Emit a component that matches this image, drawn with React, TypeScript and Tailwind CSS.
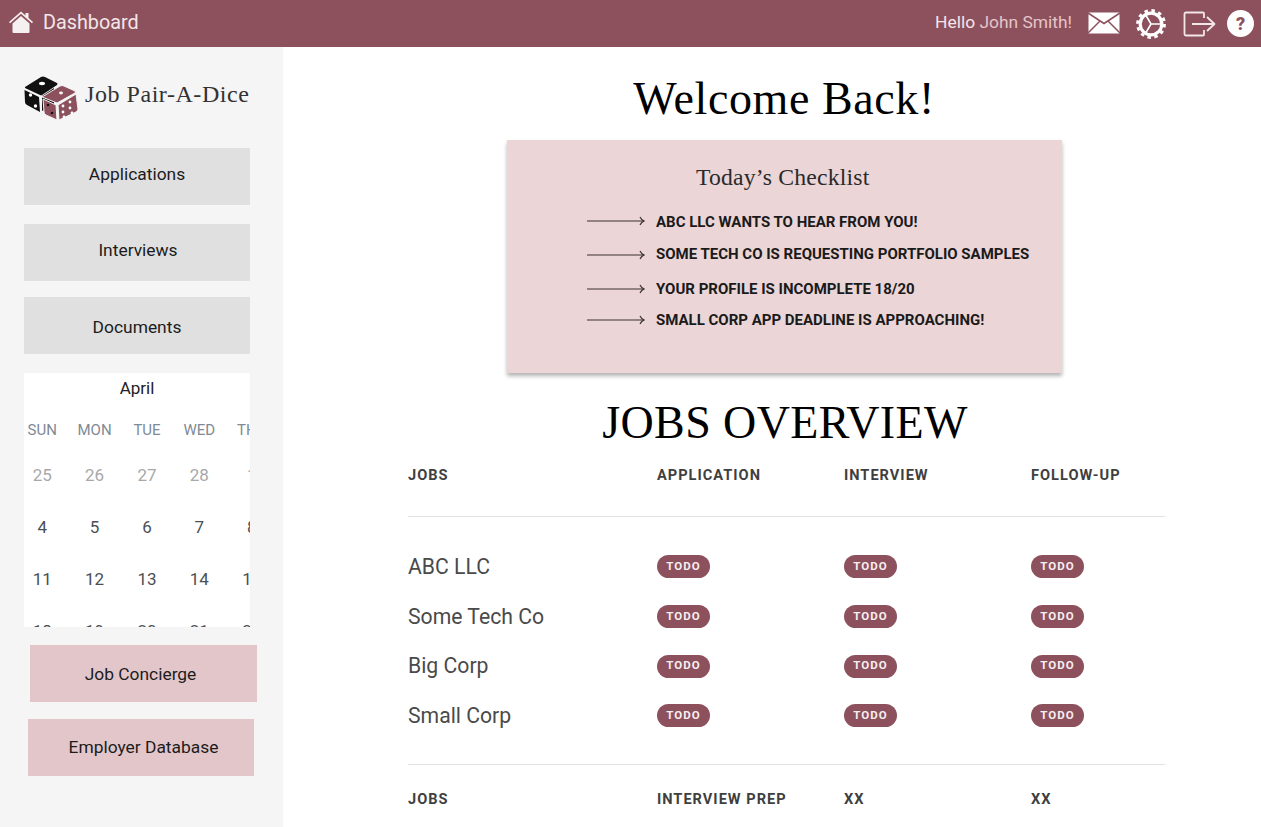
import React from "react";

const roboto = "font-['Roboto',sans-serif]";
const Arrow = ({ className }: { className: string }) => (
  <svg width="58" height="12" viewBox="0 0 58 12" className={`shrink-0 ${className}`} fill="none" stroke="#3a3030" strokeWidth="1.2">
    <path d="M0 6 H57" />
    <path d="M53 2 Q54.500 5 57 6 Q54.500 7 53 10" />
  </svg>
);

const Dice = () => (
  <svg width="56" height="46" viewBox="0 0 56 46">
    <path d="M1 12 L17 2 Q19 1 21 2 L33 8 Q34 9 33 10 L18 20 Q17 20.500 16 20 L1 13 Z" fill="#111" />
    <path d="M0.500 15 L15 22 L16 37 L3 30 Q1 29 1 27 Z" fill="#111" />
    <path d="M18 21 L30 13 L30 30 L18 36 Z" fill="#111" />
    <ellipse cx="18" cy="8.500" rx="3" ry="1.700" fill="#fff" />
    <circle cx="6.500" cy="20" r="1.700" fill="#fff" />
    <circle cx="11.500" cy="31" r="1.700" fill="#fff" />
    <path d="M18 22 L36 11 Q38 10 40 11 L51 16 Q52 17 51 18 L33 28 Z" fill="#8c515d" stroke="#f5f5f5" strokeWidth="1" />
    <path d="M19 24 L32 30 L33 45 L22 40 Q20 39 20 37 Z" fill="#8c515d" stroke="#f5f5f5" strokeWidth="1" />
    <path d="M34 30 L52 19 L54 34 Q54 36 52 37 L35 45 Z" fill="#8c515d" stroke="#f5f5f5" strokeWidth="1" />
    <ellipse cx="37" cy="18" rx="2" ry="1.400" fill="#f5f5f5" />
    <circle cx="24" cy="30" r="1.300" fill="#111" />
    <circle cx="28" cy="38" r="1.300" fill="#111" />
    <circle cx="39" cy="31" r="1.400" fill="#fff" />
    <circle cx="46" cy="27" r="1.400" fill="#fff" />
    <circle cx="39" cy="37" r="1.400" fill="#fff" />
    <circle cx="46" cy="33" r="1.400" fill="#fff" />
    <circle cx="40" cy="42" r="1.400" fill="#fff" />
    <circle cx="48" cy="38" r="1.400" fill="#fff" />
  </svg>
);

const Home = () => (
  <svg width="26" height="24" viewBox="0 0 26 24" fill="#f7f0f0">
    <path d="M1 12 L13 1.500 L17.500 5.400 V3 H20.500 V8 L25 12 L24 13.200 L13 3.800 L2 13.200 Z" />
    <path d="M4.500 13.500 L13 6 L21.500 13.500 V22 Q21.500 23 20.500 23 H5.500 Q4.500 23 4.500 22 Z" />
  </svg>
);

const Mail = () => (
  <svg width="32" height="22" viewBox="0 0 32 22">
    <rect x="0.500" y="0.500" width="31" height="21" fill="#fff" />
    <path d="M0 1 L16 11.500 L32 1 M0 21 L12 9 M32 21 L20 9" stroke="#8c515d" strokeWidth="1.500" fill="none" />
  </svg>
);

const Gear = () => (
  <svg width="32" height="32" viewBox="0 0 32 32" fill="none" stroke="#fff">
    <circle cx="16" cy="16" r="10.800" strokeWidth="3.200" />
    <circle cx="16" cy="16" r="13.500" strokeWidth="2.800" strokeDasharray="3.500 3.570" />
    <path d="M16 16 H26 M16 16 L11 7.500 M16 16 L11 24.500" strokeWidth="1.600" />
  </svg>
);

const Logout = () => (
  <svg width="33" height="26" viewBox="0 0 33 26" fill="none" stroke="#f3e6e8" strokeWidth="1.800" strokeLinejoin="round">
    <path d="M21 7 V2.500 Q21 1.500 20 1.500 H3 Q1.500 1.500 1.500 3 V23 Q1.500 24.500 3 24.500 H20 Q21 24.500 21 23.500 V19" />
    <path d="M9 13 H31 M24 6 L31.500 13 L24 20" />
  </svg>
);

const SideBtn = ({ label, className }: { label: string; className: string }) => (
  <div className={`h-[57px] flex items-center justify-center text-[17.4px] text-[#1c1c1c] ${className}`}>{label}</div>
);

const rows = [
  ["25", "26", "27", "28", "1"],
  ["4", "5", "6", "7", "8"],
  ["11", "12", "13", "14", "15"],
  ["18", "19", "20", "21", "22"],
];

const Calendar = () => (
  <div className="mt-[19px] ml-6 w-[226px] h-[254px] bg-white overflow-hidden">
    <div className="h-[30px] flex items-center justify-center text-[17px] text-[#222] pt-[2px]">April</div>
    <div className="flex w-[262px] -ml-2 h-[26px] items-center text-[15px] text-[#7f8a96] mt-[14px]">
      {["SUN", "MON", "TUE", "WED", "THU"].map((d) => (
        <div key={d} className="w-[52.4px] text-center">{d}</div>
      ))}
    </div>
    {rows.map((r, i) => (
      <div key={i} className={`flex w-[262px] -ml-2 h-[52px] items-center text-[17px] ${i === 0 ? "text-[#a8a8a8] mt-[7px]" : "text-[#4a4f55]"}`}>
        {r.map((n) => (
          <div key={n} className="w-[52.4px] text-center">{n}</div>
        ))}
      </div>
    ))}
  </div>
);

const cols = "grid grid-cols-[249px_187px_187px_134px]";

const Todo = () => (
  <span className="flex items-center justify-center w-[53px] h-[23px] rounded-full bg-[#8c515d] text-[#f7eeef] text-[11.5px] font-bold tracking-[1px]">TODO</span>
);

const Head = ({ cells }: { cells: string[] }) => (
  <div className={`${cols} text-[14.6px] font-bold tracking-[1px] text-[#3f3f3f]`}>
    {cells.map((c, i) => (
      <div key={i}>{c}</div>
    ))}
  </div>
);

const checklist = [
  ["mt-[20px]", "-mt-[3px]", "ABC LLC WANTS TO HEAR FROM YOU!"],
  ["mt-[12px]", "mt-[1px]", "SOME TECH CO IS REQUESTING PORTFOLIO SAMPLES"],
  ["mt-[15px]", "-mt-[1px]", "YOUR PROFILE IS INCOMPLETE 18/20"],
  ["mt-[11px]", "-mt-[1px]", "SMALL CORP APP DEADLINE IS APPROACHING!"],
];

export default function App() {
  return (
    <div className={`w-[1261px] h-[827px] overflow-hidden bg-white flex flex-col ${roboto}`}>
      <header className="h-[47px] shrink-0 bg-[#8c515d] flex items-center pl-2 pr-[7px]">
        <span className="-mt-[3px]"><Home /></span>
        <span className="ml-[9px] text-[19.8px] text-[#f3e6e8] -mt-[2px]">Dashboard</span>
        <div className="ml-auto flex items-center">
          <span className="text-[17.4px] text-[#f3e6e8] -mt-[2px]">Hello <span className="text-[#e6c5ca]">John Smith!</span></span>
          <span className="ml-4 -mt-[1px]"><Mail /></span>
          <span className="ml-[15px]"><Gear /></span>
          <span className="ml-[16px]"><Logout /></span>
          <span className="ml-[11px] w-[27px] h-[27px] rounded-full bg-white flex items-center justify-center text-[#8c515d] text-lg font-black">?</span>
        </div>
      </header>
      <div className="flex flex-1 min-h-0">
        <aside className="w-[283px] shrink-0 bg-[#f5f5f5]">
          <div className="flex items-center ml-6 mt-[28px] h-[46px]">
            <Dice />
            <span className="ml-[5px] -mt-[8px] font-['Liberation_Serif',serif] text-[24px] text-[#333] tracking-[0.55px]">Job Pair-A-Dice</span>
          </div>
          <SideBtn label="Applications" className="w-[226px] ml-6 mt-[27px] bg-[#e0e0e0] pb-[4px]" />
          <SideBtn label="Interviews" className="w-[226px] ml-6 mt-[19px] bg-[#e0e0e0] pb-[4px] pl-[2px]" />
          <SideBtn label="Documents" className="w-[226px] ml-6 mt-[16px] bg-[#e0e0e0] pt-[3px]" />
          <Calendar />
          <SideBtn label="Job Concierge" className="w-[227px] ml-[30px] mt-[18px] bg-[#e3c6ca] pr-[6px] pt-[1px]" />
          <SideBtn label="Employer Database" className="w-[226px] ml-[28px] mt-[17px] bg-[#e3c6ca] pl-[5px]" />
        </aside>
        <main className="flex-1 min-w-0 flex flex-col">
          <h1 className="mt-[26px] h-[52px] leading-[52px] text-center ml-[24px] font-['Liberation_Serif',serif] text-[46px] text-black tracking-[0.6px]">Welcome Back!</h1>
          <section className="mt-[15px] ml-[224px] w-[555px] h-[233px] bg-[#ebd5d6] shadow-[0_3px_4px_rgba(0,0,0,0.3)] flex flex-col">
            <h2 className="mt-[22px] ml-[189px] font-['Liberation_Serif',serif] text-[23.7px] leading-[30px] text-[#2a2a2a] tracking-[0.2px]">Today’s Checklist</h2>
            <ul className="ml-[80px] text-[15px] font-bold text-[#1a1a1a]">
              {checklist.map(([m, a, t]) => (
                <li key={t} className={`${m} h-[20px] flex items-center gap-[11px]`}><Arrow className={a} />{t}</li>
              ))}
            </ul>
          </section>
          <h2 className="mt-[25px] h-[50px] leading-[50px] text-center ml-[26px] font-['Liberation_Serif',serif] text-[46px] text-black tracking-[0.4px]">JOBS OVERVIEW</h2>
          <div className="ml-[125px] w-[757px]">
            <div className="mt-[17px]"><Head cells={["JOBS", "APPLICATION", "INTERVIEW", "FOLLOW-UP"]} /></div>
            <div className="mt-[29px] border-t border-[#e3e3e3]" />
            <div className="mt-[25px]">
              {["ABC LLC", "Some Tech Co", "Big Corp", "Small Corp"].map((n) => (
                <div key={n} className={`${cols} h-[49.7px] items-center text-[21.2px] text-[#4a4a4a]`}>
                  <div>{n}</div>
                  <div><Todo /></div>
                  <div><Todo /></div>
                  <div><Todo /></div>
                </div>
              ))}
            </div>
            <div className="mt-[23px] border-t border-[#e3e3e3]" />
            <div className="mt-[24px]"><Head cells={["JOBS", "INTERVIEW PREP", "XX", "XX"]} /></div>
          </div>
        </main>
      </div>
    </div>
  );
}
